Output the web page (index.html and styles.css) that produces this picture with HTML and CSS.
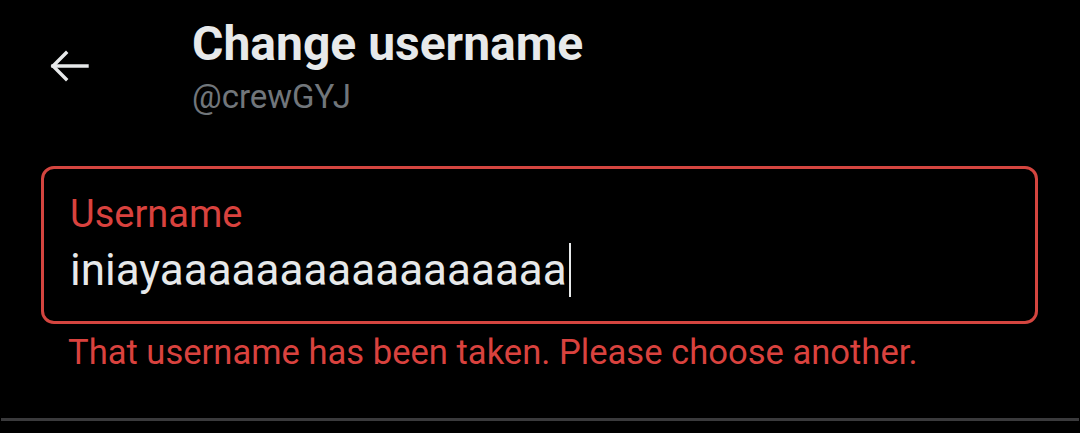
FILE: index.html
```html
<!DOCTYPE html>
<html lang="en">
<head>
<meta charset="utf-8">
<title>Change username</title>
<link rel="stylesheet" href="styles.css">
</head>
<body>
<div class="page">
  <header class="header">
    <div class="back">
      <svg class="back-icon" width="40" height="32" viewBox="0 0 40 32" fill="none" stroke="#e7e9ea" stroke-width="3.4" stroke-linecap="square">
        <path d="M4 16 H38"/>
        <path d="M17 3 L4 16 L17 29"/>
      </svg>
    </div>
    <div class="titles">
      <div class="title">Change username</div>
      <div class="handle">@crewGYJ</div>
    </div>
  </header>

  <div class="field">
    <div class="label">Username</div>
    <div class="value">iniayaaaaaaaaaaaaaaaaa<span class="caret"></span></div>
  </div>
  <div class="error">That username has been taken. Please choose another.</div>

  <div class="divider"></div>
</div>
</body>
</html>
```

FILE: styles.css
```css
html, body {
  margin: 0;
  padding: 0;
  background: #000;
}

body {
  font-family: Roboto, "Liberation Sans", sans-serif;
  color: #e7e9ea;
  width: 1080px;
  height: 433px;
  overflow: hidden;
}

.page {
  display: flex;
  flex-direction: column;
}

.header {
  display: flex;
  align-items: flex-start;
  padding-top: 16px;
}

.back {
  flex: 0 0 192px;
  padding-left: 52px;
  box-sizing: border-box;
  padding-top: 34px;
}

.back-icon {
  display: block;
  margin-left: -3px;
}

.titles {
  display: flex;
  flex-direction: column;
  gap: 6px;
}

.title {
  font-size: 48px;
  line-height: 56px;
  font-weight: 700;
  color: #e7e9ea;
}

.handle {
  font-size: 33px;
  line-height: 38px;
  color: #71767b;
}

.field {
  margin: 50px 0 0 41px;
  width: 997px;
  height: 158px;
  box-sizing: border-box;
  border: 3px solid #d4453f;
  border-radius: 13px;
  padding: 23px 24px 0 26px;
}

.label {
  font-size: 38px;
  line-height: 44px;
  color: #d9423e;
}

.value {
  margin-top: 6px;
  font-size: 44px;
  line-height: 56px;
  color: #e7e9ea;
  display: flex;
  align-items: center;
}

.caret {
  display: inline-block;
  width: 2px;
  height: 54px;
  background: #e7e9ea;
  margin-left: 2px;
}

.error {
  margin: 8px 0 0 68px;
  font-size: 34.6px;
  line-height: 40px;
  color: #d9423e;
}

.divider {
  margin: 46px 1px 0 1px;
  height: 3px;
  background: #3a3a3c;
}
```
